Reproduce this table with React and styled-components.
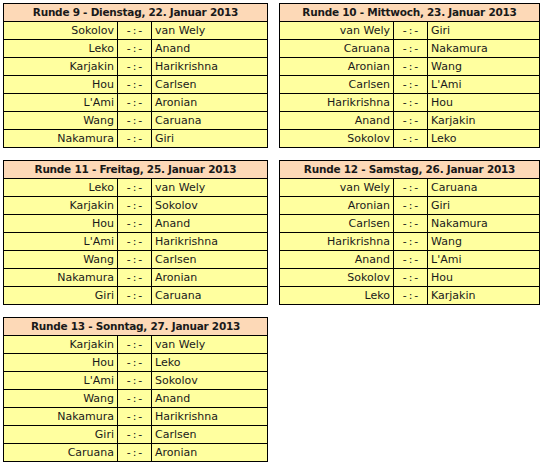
import styled, { createGlobalStyle } from "styled-components";

const GlobalStyle = createGlobalStyle`
  body {
    margin: 0;
    background: #ffffff;
    font-family: "DejaVu Sans", Verdana, sans-serif;
  }
`;

const rounds = [
  {
    title: "Runde 9 - Dienstag, 22. Januar 2013",
    games: [
      ["Sokolov", "van Wely"],
      ["Leko", "Anand"],
      ["Karjakin", "Harikrishna"],
      ["Hou", "Carlsen"],
      ["L'Ami", "Aronian"],
      ["Wang", "Caruana"],
      ["Nakamura", "Giri"],
    ],
  },
  {
    title: "Runde 10 - Mittwoch, 23. Januar 2013",
    games: [
      ["van Wely", "Giri"],
      ["Caruana", "Nakamura"],
      ["Aronian", "Wang"],
      ["Carlsen", "L'Ami"],
      ["Harikrishna", "Hou"],
      ["Anand", "Karjakin"],
      ["Sokolov", "Leko"],
    ],
  },
  {
    title: "Runde 11 - Freitag, 25. Januar 2013",
    games: [
      ["Leko", "van Wely"],
      ["Karjakin", "Sokolov"],
      ["Hou", "Anand"],
      ["L'Ami", "Harikrishna"],
      ["Wang", "Carlsen"],
      ["Nakamura", "Aronian"],
      ["Giri", "Caruana"],
    ],
  },
  {
    title: "Runde 12 - Samstag, 26. Januar 2013",
    games: [
      ["van Wely", "Caruana"],
      ["Aronian", "Giri"],
      ["Carlsen", "Nakamura"],
      ["Harikrishna", "Wang"],
      ["Anand", "L'Ami"],
      ["Sokolov", "Hou"],
      ["Leko", "Karjakin"],
    ],
  },
  {
    title: "Runde 13 - Sonntag, 27. Januar 2013",
    games: [
      ["Karjakin", "van Wely"],
      ["Hou", "Leko"],
      ["L'Ami", "Sokolov"],
      ["Wang", "Anand"],
      ["Nakamura", "Harikrishna"],
      ["Giri", "Carlsen"],
      ["Caruana", "Aronian"],
    ],
  },
];

const Page = styled.div`
  display: grid;
  grid-template-columns: 265px 261px;
  column-gap: 11px;
  row-gap: 12px;
  padding: 3px 0 0 3px;
  align-items: start;
`;

const RoundTable = styled.table`
  border-collapse: collapse;
  width: ${(props) => props.width}px;
  table-layout: fixed;
  font-size: 11px;
  color: #1a1a1a;
`;

const HeadCell = styled.th`
  background: #fdd9b7;
  border: 1px solid #000;
  height: 17px;
  padding: 0;
  font-size: 10.5px;
  letter-spacing: -0.25px;
  font-weight: bold;
  text-align: center;
  line-height: 17px;
`;

const Cell = styled.td`
  background: #ffff9f;
  border: 1px solid #000;
  height: 17px;
  padding: 0 3px;
  line-height: 17px;
  white-space: nowrap;
  text-align: ${(props) => props.align || "left"};
`;

// Verdana's "-:-" is wider than DejaVu's, so spread it a little
const Score = styled(Cell)`
  text-align: center;
  letter-spacing: 2px;
  padding: 0 0 0 2px;
`;

function Round({ round, width }) {
  return (
    <RoundTable width={width}>
      <colgroup>
        <col style={{ width: 114 }} />
        <col style={{ width: 34 }} />
        <col />
      </colgroup>
      <thead>
        <tr>
          <HeadCell colSpan={3}>{round.title}</HeadCell>
        </tr>
      </thead>
      <tbody>
        {round.games.map(([white, black]) => (
          <tr key={white}>
            <Cell align="right">{white}</Cell>
            <Score>-:-</Score>
            <Cell>{black}</Cell>
          </tr>
        ))}
      </tbody>
    </RoundTable>
  );
}

export default function App() {
  return (
    <>
      <GlobalStyle />
      <Page>
        {rounds.map((round, i) => (
          <Round key={round.title} round={round} width={i % 2 === 0 ? 265 : 261} />
        ))}
      </Page>
    </>
  );
}
